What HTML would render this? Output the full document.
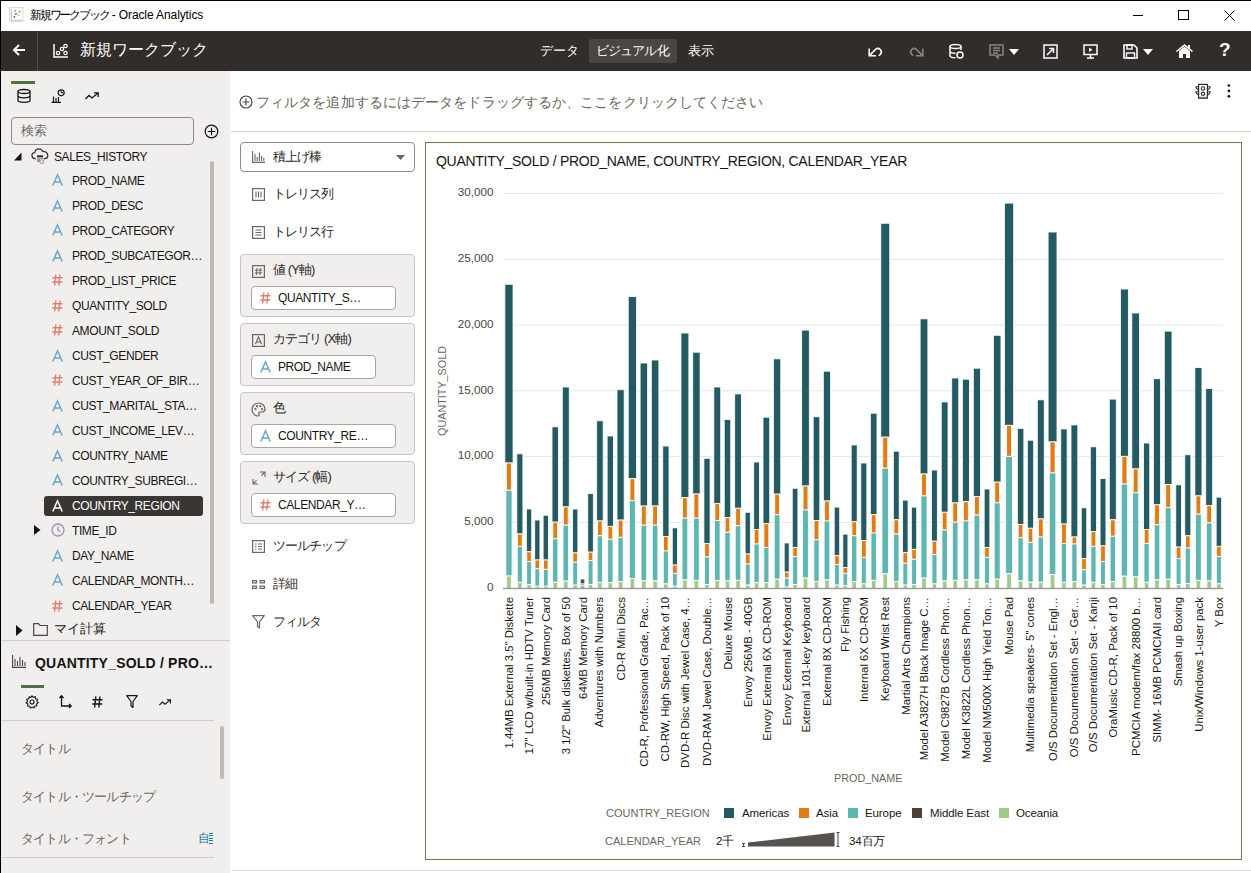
<!DOCTYPE html>
<html><head><meta charset="utf-8">
<style>
*{box-sizing:border-box;margin:0;padding:0}
html,body{width:1251px;height:873px;overflow:hidden;background:#fff;font-family:"Liberation Sans",sans-serif;color:#161513}
.a{position:absolute;white-space:nowrap}
svg{position:absolute;overflow:visible}
.t12{font-size:12px;letter-spacing:-0.4px;line-height:14px}
.ico{position:absolute}
</style></head><body>
<!-- window border -->
<div class="a" style="left:0;top:0;width:1251px;height:1px;background:#000"></div>
<div class="a" style="left:0;top:0;width:1px;height:873px;background:#000"></div>
<!-- title bar -->
<svg style="left:9px;top:7px" width="15" height="16" viewBox="0 0 15 16"><rect x="0.5" y="0.5" width="13.5" height="14" fill="#fbfbfb" stroke="#dcdcdc"/><path d="M2.3 2.2V13.2H13.5" stroke="#c4c4c4" stroke-width="1.1" fill="none"/><circle cx="6" cy="3.8" r="1.1" fill="#f0a040"/><circle cx="10.6" cy="4.8" r="1.1" fill="#f0a040"/><circle cx="6.9" cy="6.8" r="1.1" fill="#4a90d8"/><circle cx="9.5" cy="8" r="1.1" fill="#f0c840"/><circle cx="5.3" cy="9.8" r="1.1" fill="#4a90d8"/></svg>
<div class="a" style="left:30px;top:8px;font-size:12px;line-height:15px;color:#000"><span style="letter-spacing:-2.2px">新規ワークブック</span><span style="letter-spacing:-0.1px"> - Oracle Analytics</span></div>
<div class="a" style="left:1133px;top:15px;width:10px;height:1px;background:#000"></div>
<div class="a" style="left:1178px;top:10px;width:11px;height:10px;border:1px solid #000"></div>
<svg style="left:1224px;top:10px" width="11" height="11" viewBox="0 0 11 11"><path d="M0.5 0.5L10.5 10.5M10.5 0.5L0.5 10.5" stroke="#000" stroke-width="1"/></svg>
<!-- header -->
<div class="a" style="left:1px;top:31px;width:1250px;height:40px;background:#312d2a"></div>
<div class="a" style="left:37px;top:31px;width:1px;height:40px;background:#55504c"></div>
<svg style="left:11px;top:43px" width="16" height="14" viewBox="0 0 16 14"><path d="M14 7H3M8 2L3 7L8 12" stroke="#fff" stroke-width="2" fill="none"/></svg>
<svg style="left:53px;top:44px" width="16" height="14" viewBox="0 0 16 14">
<path d="M1 0V13H15" stroke="#fff" stroke-width="1.5" fill="none"/>
<circle cx="5" cy="9" r="1.7" stroke="#fff" stroke-width="1.2" fill="none"/><circle cx="9" cy="5" r="1.7" stroke="#fff" stroke-width="1.2" fill="none"/><circle cx="12.5" cy="2" r="1.7" stroke="#fff" stroke-width="1.2" fill="none"/><circle cx="12.5" cy="9" r="1.7" stroke="#fff" stroke-width="1.2" fill="none"/>
</svg>
<div class="a" style="left:80px;top:41px;font-size:16px;line-height:18px;color:#fff">新規ワークブック</div>
<div class="a" style="left:589px;top:39px;width:88px;height:24px;background:#4a4643;border-radius:3px"></div>
<div class="a" style="left:540px;top:44px;font-size:13px;line-height:14px;color:#fff">データ</div>
<div class="a" style="left:596px;top:44px;font-size:13px;line-height:14px;color:#fff;letter-spacing:-0.9px">ビジュアル化</div>
<div class="a" style="left:688px;top:44px;font-size:13px;line-height:14px;color:#fff">表示</div>
<!-- header right icons -->
<svg style="left:868px;top:45.5px" width="15" height="11" viewBox="0 0 15 11"><path d="M1.2 2.5V9.8H8M1.6 9.4L7.6 3.4A3.4 3.4 0 0 1 12.4 8.2L10.8 9.8" stroke="#fff" stroke-width="1.6" fill="none"/></svg>
<svg style="left:909px;top:45.5px" width="15" height="11" viewBox="0 0 15 11"><path d="M13.8 2.5V9.8H7M13.4 9.4L7.4 3.4A3.4 3.4 0 0 0 2.6 8.2L4.2 9.8" stroke="#8a8480" stroke-width="1.6" fill="none"/></svg>
<svg style="left:949px;top:44px" width="15" height="15" viewBox="0 0 15 15"><ellipse cx="6.5" cy="2.5" rx="5.5" ry="2" stroke="#fff" stroke-width="1.5" fill="none"/><path d="M1 2.5V11.5C1 13 4 13.8 6.5 13.8M12 2.5V6M1 7C1 8.5 4 9.3 6.5 9.3" stroke="#fff" stroke-width="1.5" fill="none"/><circle cx="11" cy="11" r="3" stroke="#fff" stroke-width="1.5" fill="none"/></svg>
<svg style="left:989px;top:44px" width="15" height="15" viewBox="0 0 15 15"><path d="M1 1H14V11H9V14L6 11H1Z" stroke="#8a8480" stroke-width="1.5" fill="none"/><path d="M4 4H11M4 6.5H11M4 9H9" stroke="#8a8480" stroke-width="1.3"/></svg>
<svg style="left:1009px;top:49px" width="11" height="7" viewBox="0 0 11 7"><path d="M0 0H10L5 6Z" fill="#fff"/></svg>
<svg style="left:1043px;top:44px" width="15" height="15" viewBox="0 0 15 15"><rect x="1" y="1" width="13" height="13" stroke="#fff" stroke-width="1.5" fill="none"/><path d="M4 11L10.5 4.5M6 4.5H10.5V9" stroke="#fff" stroke-width="1.5" fill="none"/></svg>
<svg style="left:1083px;top:44px" width="15" height="15" viewBox="0 0 15 15"><rect x="1" y="1" width="13" height="9.5" stroke="#fff" stroke-width="1.5" fill="none"/><path d="M6 3.5V8L9.5 5.75Z" fill="#fff"/><path d="M7.5 11V13.5M4 14H11" stroke="#fff" stroke-width="1.5"/></svg>
<svg style="left:1123px;top:44px" width="15" height="15" viewBox="0 0 15 15"><path d="M1 1H11L14 4V14H1Z" stroke="#fff" stroke-width="1.6" fill="none"/><rect x="4" y="1" width="5" height="4" stroke="#fff" stroke-width="1.4" fill="none"/><rect x="3.5" y="9" width="8" height="5" stroke="#fff" stroke-width="1.4" fill="none"/></svg>
<svg style="left:1143px;top:49px" width="11" height="7" viewBox="0 0 11 7"><path d="M0 0H10L5 6Z" fill="#fff"/></svg>
<svg style="left:1176px;top:44px" width="17" height="15" viewBox="0 0 17 15"><path d="M0.5 7.5L8.5 1L16.5 7.5" stroke="#fff" stroke-width="1.6" fill="none"/><path d="M3 7V14H7V10H10V14H14V7L8.5 2.5Z" fill="#fff"/><rect x="12" y="1" width="2" height="4" fill="#fff"/></svg>
<div class="a" style="left:1219px;top:40px;font-size:19px;line-height:20px;color:#fff;font-weight:bold">?</div>
<div class="a" style="left:1px;top:71px;width:229px;height:802px;background:#f1efed"></div>
<div class="a" style="left:11px;top:81px;width:24px;height:3px;background:#4e7341"></div>
<svg style="left:17px;top:89px" width="14" height="14" viewBox="0 0 14 14"><ellipse cx="7" cy="2.5" rx="6" ry="2" stroke="#161513" stroke-width="1.3" fill="none"/><path d="M1 2.5V11.2C1 12.5 4 13.3 7 13.3S13 12.5 13 11.2V2.5M1 6.8C1 8 4 8.8 7 8.8S13 8 13 6.8" stroke="#161513" stroke-width="1.3" fill="none"/></svg>
<svg style="left:51px;top:89px" width="14" height="14" viewBox="0 0 14 14"><path d="M0.5 13.3H10M2.5 13V7.5M5 13V9M7.5 13V8" stroke="#161513" stroke-width="1.2" fill="none"/><circle cx="10.2" cy="3.8" r="3" stroke="#161513" stroke-width="1.2" fill="none"/><path d="M10.2 1.5V3.8H12.4" stroke="#161513" stroke-width="1" fill="none"/></svg>
<svg style="left:85px;top:92px" width="14" height="8" viewBox="0 0 14 8"><path d="M0.5 7L4 3.5L7 6L13 1M9 0.8H13.2V5" stroke="#161513" stroke-width="1.3" fill="none"/></svg>
<div class="a" style="left:11px;top:117px;width:183px;height:28px;border:1px solid #8f8a85;border-radius:4px;background:#f1efed"></div>
<div class="a" style="left:21px;top:124px;font-size:13px;line-height:14px;color:#6f6a66">検索</div>
<svg style="left:204px;top:124px" width="15" height="15" viewBox="0 0 15 15"><circle cx="7.5" cy="7.5" r="6.3" stroke="#161513" stroke-width="1.2" fill="none"/><path d="M7.5 3.8V11.2M3.8 7.5H11.2" stroke="#161513" stroke-width="1.2"/></svg>
<div class="a" style="left:210px;top:161px;width:4px;height:443px;background:#bdb9b4;border-radius:2px"></div>
<svg style="left:14px;top:152px" width="8" height="9" viewBox="0 0 8 9"><path d="M7.5 0.5V8.5H0Z" fill="#161513"/></svg>
<svg style="left:31px;top:148px" width="18" height="17" viewBox="0 0 18 17"><path d="M4.8 10.6H4C2.2 10.6 0.9 9.3 0.9 7.6C0.9 5.9 2.2 4.6 3.8 4.6C4.2 2.4 5.8 0.8 7.8 0.8C9.6 0.8 11 1.9 11.6 3.4C14.6 3.2 16.8 5.2 16.8 7.6C16.8 9.3 15.6 10.6 13.8 10.6H12.6" stroke="#312d2a" stroke-width="1.2" fill="none"/><rect x="6" y="7.3" width="6" height="1.8" fill="#312d2a"/><rect x="6" y="9.4" width="6" height="1.3" fill="#8a8682"/><rect x="6" y="11" width="3" height="3" fill="#9a9692"/><circle cx="10.8" cy="13.6" r="1.9" stroke="#8a8682" stroke-width="0.9" fill="none"/></svg>
<div class="a t12" style="left:54px;top:150px">SALES_HISTORY</div>
<svg style="left:52px;top:174px" width="11" height="12" viewBox="0 0 11 12"><path d="M0.8 11.5L5.5 0.8L10.2 11.5M2.3 8H8.7" stroke="#6aa6c4" stroke-width="1.5" fill="none"/></svg>
<div class="a t12" style="left:72px;top:174px;color:#161513">PROD_NAME</div>
<svg style="left:52px;top:200px" width="11" height="12" viewBox="0 0 11 12"><path d="M0.8 11.5L5.5 0.8L10.2 11.5M2.3 8H8.7" stroke="#6aa6c4" stroke-width="1.5" fill="none"/></svg>
<div class="a t12" style="left:72px;top:199px;color:#161513">PROD_DESC</div>
<svg style="left:52px;top:224px" width="11" height="12" viewBox="0 0 11 12"><path d="M0.8 11.5L5.5 0.8L10.2 11.5M2.3 8H8.7" stroke="#6aa6c4" stroke-width="1.5" fill="none"/></svg>
<div class="a t12" style="left:72px;top:224px;color:#161513">PROD_CATEGORY</div>
<svg style="left:52px;top:250px" width="11" height="12" viewBox="0 0 11 12"><path d="M0.8 11.5L5.5 0.8L10.2 11.5M2.3 8H8.7" stroke="#6aa6c4" stroke-width="1.5" fill="none"/></svg>
<div class="a t12" style="left:72px;top:249px;color:#161513">PROD_SUBCATEGOR…</div>
<svg style="left:52px;top:274px" width="11" height="12" viewBox="0 0 11 12"><path d="M3.8 0.5L2.6 11.5M8 0.5L6.8 11.5M0.5 3.8H10.5M0.3 8H10.3" stroke="#e07f6e" stroke-width="1.4" fill="none"/></svg>
<div class="a t12" style="left:72px;top:274px;color:#161513">PROD_LIST_PRICE</div>
<svg style="left:52px;top:300px" width="11" height="12" viewBox="0 0 11 12"><path d="M3.8 0.5L2.6 11.5M8 0.5L6.8 11.5M0.5 3.8H10.5M0.3 8H10.3" stroke="#e07f6e" stroke-width="1.4" fill="none"/></svg>
<div class="a t12" style="left:72px;top:299px;color:#161513">QUANTITY_SOLD</div>
<svg style="left:52px;top:324px" width="11" height="12" viewBox="0 0 11 12"><path d="M3.8 0.5L2.6 11.5M8 0.5L6.8 11.5M0.5 3.8H10.5M0.3 8H10.3" stroke="#e07f6e" stroke-width="1.4" fill="none"/></svg>
<div class="a t12" style="left:72px;top:324px;color:#161513">AMOUNT_SOLD</div>
<svg style="left:52px;top:350px" width="11" height="12" viewBox="0 0 11 12"><path d="M0.8 11.5L5.5 0.8L10.2 11.5M2.3 8H8.7" stroke="#6aa6c4" stroke-width="1.5" fill="none"/></svg>
<div class="a t12" style="left:72px;top:349px;color:#161513">CUST_GENDER</div>
<svg style="left:52px;top:374px" width="11" height="12" viewBox="0 0 11 12"><path d="M3.8 0.5L2.6 11.5M8 0.5L6.8 11.5M0.5 3.8H10.5M0.3 8H10.3" stroke="#e07f6e" stroke-width="1.4" fill="none"/></svg>
<div class="a t12" style="left:72px;top:374px;color:#161513">CUST_YEAR_OF_BIR…</div>
<svg style="left:52px;top:400px" width="11" height="12" viewBox="0 0 11 12"><path d="M0.8 11.5L5.5 0.8L10.2 11.5M2.3 8H8.7" stroke="#6aa6c4" stroke-width="1.5" fill="none"/></svg>
<div class="a t12" style="left:72px;top:399px;color:#161513">CUST_MARITAL_STA…</div>
<svg style="left:52px;top:424px" width="11" height="12" viewBox="0 0 11 12"><path d="M0.8 11.5L5.5 0.8L10.2 11.5M2.3 8H8.7" stroke="#6aa6c4" stroke-width="1.5" fill="none"/></svg>
<div class="a t12" style="left:72px;top:424px;color:#161513">CUST_INCOME_LEV…</div>
<svg style="left:52px;top:450px" width="11" height="12" viewBox="0 0 11 12"><path d="M0.8 11.5L5.5 0.8L10.2 11.5M2.3 8H8.7" stroke="#6aa6c4" stroke-width="1.5" fill="none"/></svg>
<div class="a t12" style="left:72px;top:449px;color:#161513">COUNTRY_NAME</div>
<svg style="left:52px;top:474px" width="11" height="12" viewBox="0 0 11 12"><path d="M0.8 11.5L5.5 0.8L10.2 11.5M2.3 8H8.7" stroke="#6aa6c4" stroke-width="1.5" fill="none"/></svg>
<div class="a t12" style="left:72px;top:474px;color:#161513">COUNTRY_SUBREGI…</div>
<div class="a" style="left:44px;top:496px;width:159px;height:20px;background:#3a3633;border-radius:3px"></div>
<svg style="left:52px;top:500px" width="11" height="12" viewBox="0 0 11 12"><path d="M0.8 11.5L5.5 0.8L10.2 11.5M2.3 8H8.7" stroke="#fff" stroke-width="1.5" fill="none"/></svg>
<div class="a t12" style="left:72px;top:499px;color:#fff">COUNTRY_REGION</div>
<svg style="left:34px;top:525px" width="7" height="10" viewBox="0 0 7 10"><path d="M0 0L6.5 5L0 10Z" fill="#161513"/></svg>
<svg style="left:51px;top:523px" width="14" height="14" viewBox="0 0 14 14"><circle cx="7" cy="7" r="6" stroke="#9c8fba" stroke-width="1.3" fill="none"/><path d="M7 3.5V7.3L9.5 8.8" stroke="#9c8fba" stroke-width="1.3" fill="none"/></svg>
<div class="a t12" style="left:72px;top:524px;color:#161513">TIME_ID</div>
<svg style="left:52px;top:550px" width="11" height="12" viewBox="0 0 11 12"><path d="M0.8 11.5L5.5 0.8L10.2 11.5M2.3 8H8.7" stroke="#6aa6c4" stroke-width="1.5" fill="none"/></svg>
<div class="a t12" style="left:72px;top:549px;color:#161513">DAY_NAME</div>
<svg style="left:52px;top:574px" width="11" height="12" viewBox="0 0 11 12"><path d="M0.8 11.5L5.5 0.8L10.2 11.5M2.3 8H8.7" stroke="#6aa6c4" stroke-width="1.5" fill="none"/></svg>
<div class="a t12" style="left:72px;top:574px;color:#161513">CALENDAR_MONTH…</div>
<svg style="left:52px;top:600px" width="11" height="12" viewBox="0 0 11 12"><path d="M3.8 0.5L2.6 11.5M8 0.5L6.8 11.5M0.5 3.8H10.5M0.3 8H10.3" stroke="#e07f6e" stroke-width="1.4" fill="none"/></svg>
<div class="a t12" style="left:72px;top:599px;color:#161513">CALENDAR_YEAR</div>
<svg style="left:16px;top:625px" width="7" height="11" viewBox="0 0 7 11"><path d="M0 0L6.5 5.5L0 11Z" fill="#161513"/></svg>
<svg style="left:33px;top:623px" width="15" height="13" viewBox="0 0 15 13"><path d="M0.7 0.7H5.5L7 2.5H14.3V12.3H0.7Z" stroke="#4a4643" stroke-width="1.2" fill="none"/></svg>
<div class="a" style="left:54px;top:622px;font-size:13px;line-height:14px">マイ計算</div>
<div class="a" style="left:1px;top:640px;width:229px;height:1px;background:#cfcbc6"></div>
<svg style="left:12px;top:655px" width="14" height="13" viewBox="0 0 14 13"><path d="M0.6 0V12.4H14M3 11V4M5.5 11V6M8 11V2M10.5 11V5M13 11V7" stroke="#4a4643" stroke-width="1.1" fill="none"/></svg>
<div class="a" style="left:35px;top:655px;font-size:14px;line-height:16px;font-weight:bold;letter-spacing:0.2px">QUANTITY_SOLD / PRO…</div>
<div class="a" style="left:21px;top:685px;width:23px;height:3px;background:#4e7341"></div>
<svg style="left:25px;top:695px" width="14" height="14" viewBox="0 0 14 14"><path d="M7 0.8L8.3 2.3L10.2 1.8L10.6 3.7L12.4 4.4L11.8 6.3L13.2 7.7L11.6 8.9L11.8 10.8L9.9 11L9 12.8L7.2 12L5.4 13L4.6 11.2L2.6 11L2.9 9L1.2 7.8L2.5 6.3L1.8 4.4L3.7 3.8L4.1 1.9L6 2.4Z" stroke="#161513" stroke-width="1.1" fill="none"/><circle cx="7" cy="7" r="2" stroke="#161513" stroke-width="1.1" fill="none"/></svg>
<svg style="left:59px;top:695px" width="13" height="14" viewBox="0 0 13 14"><path d="M2.5 1V11H12M0.5 3L2.5 0.8L4.5 3M10 9L12.2 11L10 13" stroke="#161513" stroke-width="1.3" fill="none"/></svg>
<svg style="left:92px;top:696px" width="11" height="12" viewBox="0 0 11 12"><path d="M3.8 0.5L2.6 11.5M8 0.5L6.8 11.5M0.5 3.8H10.5M0.3 8H10.3" stroke="#161513" stroke-width="1.4" fill="none"/></svg>
<svg style="left:126px;top:695px" width="12" height="13" viewBox="0 0 12 13"><path d="M0.7 0.7H11.3L7 6.5V12.5L5 11V6.5Z" stroke="#161513" stroke-width="1.2" fill="none" stroke-linejoin="round"/></svg>
<svg style="left:158px;top:699px" width="14" height="7" viewBox="0 0 14 8"><path d="M0.5 7L4 3.5L7 6L13 1M9 0.8H13.2V5" stroke="#161513" stroke-width="1.3" fill="none"/></svg>
<div class="a" style="left:1px;top:720px;width:213px;height:1px;background:#cfcbc6"></div>
<div class="a" style="left:220px;top:726px;width:4px;height:53px;background:#bdb9b4;border-radius:2px"></div>
<div class="a" style="left:21px;top:742px;font-size:13px;line-height:14px;color:#6b6560;letter-spacing:-0.8px">タイトル</div>
<div class="a" style="left:21px;top:790px;font-size:13px;line-height:14px;color:#6b6560;letter-spacing:-0.8px">タイトル・ツールチップ</div>
<div class="a" style="left:21px;top:832px;font-size:13px;line-height:14px;color:#6b6560;letter-spacing:-0.8px">タイトル・フォント</div>
<div class="a" style="left:198px;top:832px;font-size:12px;line-height:13px;color:#1f7a9a">自</div>
<div class="a" style="left:209px;top:833px;width:4px;height:11px;background:repeating-linear-gradient(#1f7a9a 0 1px,transparent 1px 2.5px)"></div>
<div class="a" style="left:1px;top:857px;width:213px;height:1px;background:#cfcbc6"></div><svg style="left:239px;top:95px" width="14" height="14" viewBox="0 0 14 14"><circle cx="7" cy="7" r="6" stroke="#4a4643" stroke-width="1.2" fill="none"/><path d="M7 3.5V10.5M3.5 7H10.5" stroke="#4a4643" stroke-width="1.2"/></svg>
<div class="a" style="left:256px;top:94px;font-size:14px;line-height:16px;color:#6b6560;letter-spacing:0.1px">フィルタを追加するにはデータをドラッグするか、ここをクリックしてください</div>
<svg style="left:1195px;top:83px" width="16" height="17" viewBox="0 0 16 17"><rect x="3.6" y="1.4" width="8.8" height="14" stroke="#312d2a" stroke-width="1.2" fill="none"/><rect x="3.6" y="13.8" width="8.8" height="1.8" fill="#7a7672"/><path d="M3.4 3.8H1V4.8L3.4 7M3.4 8.8H1V9.8L3.4 12M12.6 3.8H15V4.8L12.6 7M12.6 8.8H15V9.8L12.6 12" stroke="#312d2a" stroke-width="1.1" fill="none"/><circle cx="8" cy="5.5" r="1.7" stroke="#312d2a" stroke-width="1.1" fill="none"/><circle cx="8" cy="10.8" r="1.7" stroke="#312d2a" stroke-width="1.1" fill="none"/></svg>
<svg style="left:1226px;top:83px" width="6" height="16" viewBox="0 0 6 16"><circle cx="2.9" cy="2.5" r="1.35" fill="#161513"/><circle cx="2.9" cy="7.9" r="1.35" fill="#161513"/><circle cx="2.9" cy="13.3" r="1.35" fill="#161513"/></svg>
<div class="a" style="left:231px;top:131px;width:1020px;height:1px;background:#d6d2ce"></div>
<div class="a" style="left:231px;top:870px;width:1020px;height:1px;background:#e0ddd9"></div>
<div class="a" style="left:240px;top:142px;width:175px;height:30px;border:1px solid #8f8a85;border-radius:4px"></div>
<svg style="left:252px;top:151px" width="13" height="12" viewBox="0 0 13 12"><path d="M0.6 0V11.4H13M3 10V3M5.2 10V6M7.4 10V1.5M9.6 10V5M11.8 10V7" stroke="#6b6560" stroke-width="1.1" fill="none"/></svg>
<div class="a" style="left:273px;top:150px;font-size:13px;line-height:14px;color:#2b2825;letter-spacing:-0.9px">積上げ棒</div>
<svg style="left:396px;top:155px" width="9" height="5" viewBox="0 0 9 5"><path d="M0 0H9L4.5 5Z" fill="#6b6560"/></svg>
<svg style="left:252px;top:188px" width="13" height="13" viewBox="0 0 13 13"><rect x="0.6" y="0.6" width="11.8" height="11.8" stroke="#6b6560" stroke-width="1.2" fill="none"/><path d="M4 3.5V9.5M6.5 3.5V9.5M9 3.5V9.5" stroke="#6b6560" stroke-width="1.1"/></svg>
<div class="a" style="left:273px;top:187px;font-size:13px;line-height:14px;color:#2b2825;letter-spacing:-0.9px">トレリス列</div>
<svg style="left:252px;top:226px" width="13" height="13" viewBox="0 0 13 13"><rect x="0.6" y="0.6" width="11.8" height="11.8" stroke="#6b6560" stroke-width="1.2" fill="none"/><path d="M3.5 4H9.5M3.5 6.5H9.5M3.5 9H9.5" stroke="#6b6560" stroke-width="1.1"/></svg>
<div class="a" style="left:273px;top:225px;font-size:13px;line-height:14px;color:#2b2825;letter-spacing:-0.9px">トレリス行</div>
<div class="a" style="left:240px;top:254px;width:175px;height:63px;border:1px solid #c9c5c0;border-radius:4px;background:#f1efed"></div>
<svg style="left:252px;top:265px" width="13" height="13" viewBox="0 0 13 13"><rect x="0.6" y="0.6" width="11.8" height="11.8" stroke="#6b6560" stroke-width="1.2" fill="none"/><path d="M5 3L4.3 10M8.5 3L7.8 10M3 5.2H10M3 7.9H10" stroke="#6b6560" stroke-width="1"/></svg>
<div class="a" style="left:273px;top:263px;font-size:13px;line-height:14px;color:#2b2825;letter-spacing:-0.9px">値 (Y軸)</div>
<div class="a" style="left:251px;top:286px;width:145px;height:24px;border:1px solid #aaa5a0;border-radius:4px;background:#fff"></div>
<svg style="left:260px;top:292px" width="11" height="12" viewBox="0 0 11 12"><path d="M3.8 0.5L2.6 11.5M8 0.5L6.8 11.5M0.5 3.8H10.5M0.3 8H10.3" stroke="#e07f6e" stroke-width="1.4" fill="none"/></svg>
<div class="a t12" style="left:278px;top:291px">QUANTITY_S…</div>
<div class="a" style="left:240px;top:323px;width:175px;height:63px;border:1px solid #c9c5c0;border-radius:4px;background:#f1efed"></div>
<svg style="left:252px;top:334px" width="13" height="13" viewBox="0 0 13 13"><rect x="0.6" y="0.6" width="11.8" height="11.8" stroke="#6b6560" stroke-width="1.2" fill="none"/><path d="M3.5 10L6.5 3L9.5 10M4.5 8H8.5" stroke="#6b6560" stroke-width="1.1" fill="none"/></svg>
<div class="a" style="left:273px;top:332px;font-size:13px;line-height:14px;color:#2b2825;letter-spacing:-0.9px">カテゴリ (X軸)</div>
<div class="a" style="left:251px;top:355px;width:125px;height:24px;border:1px solid #aaa5a0;border-radius:4px;background:#fff"></div>
<svg style="left:260px;top:361px" width="11" height="12" viewBox="0 0 11 12"><path d="M0.8 11.5L5.5 0.8L10.2 11.5M2.3 8H8.7" stroke="#6aa6c4" stroke-width="1.5" fill="none"/></svg>
<div class="a t12" style="left:278px;top:360px">PROD_NAME</div>
<div class="a" style="left:240px;top:392px;width:175px;height:63px;border:1px solid #c9c5c0;border-radius:4px;background:#f1efed"></div>
<svg style="left:251px;top:402px" width="15" height="15" viewBox="0 0 15 15"><path d="M7.5 1C3.8 1 1 3.8 1 7.5S3.8 14 7 14C8.3 14 8.5 13 8 12C7.5 11 8 10 9.2 10H11C12.8 10 14 8.8 14 7C14 3.7 11 1 7.5 1Z" stroke="#6b6560" stroke-width="1.2" fill="none"/><circle cx="4.5" cy="7" r="1.1" fill="#6b6560"/><circle cx="6" cy="4.2" r="1.1" fill="#6b6560"/><circle cx="9.3" cy="4.2" r="1.1" fill="#6b6560"/><circle cx="11" cy="7" r="1.1" fill="#6b6560"/></svg>
<div class="a" style="left:273px;top:401px;font-size:13px;line-height:14px;color:#2b2825;letter-spacing:-0.9px">色</div>
<div class="a" style="left:251px;top:424px;width:145px;height:24px;border:1px solid #aaa5a0;border-radius:4px;background:#fff"></div>
<svg style="left:260px;top:430px" width="11" height="12" viewBox="0 0 11 12"><path d="M0.8 11.5L5.5 0.8L10.2 11.5M2.3 8H8.7" stroke="#6aa6c4" stroke-width="1.5" fill="none"/></svg>
<div class="a t12" style="left:278px;top:429px">COUNTRY_RE…</div>
<div class="a" style="left:240px;top:461px;width:175px;height:63px;border:1px solid #c9c5c0;border-radius:4px;background:#f1efed"></div>
<svg style="left:252px;top:471px" width="14" height="14" viewBox="0 0 14 14"><path d="M1 8V13H6M8 1H13V6M1 13L4.5 9.5M13 1L9.5 4.5" stroke="#6b6560" stroke-width="1.1" fill="none"/></svg>
<div class="a" style="left:273px;top:470px;font-size:13px;line-height:14px;color:#2b2825;letter-spacing:-0.9px">サイズ (幅)</div>
<div class="a" style="left:251px;top:493px;width:145px;height:24px;border:1px solid #aaa5a0;border-radius:4px;background:#fff"></div>
<svg style="left:260px;top:499px" width="11" height="12" viewBox="0 0 11 12"><path d="M3.8 0.5L2.6 11.5M8 0.5L6.8 11.5M0.5 3.8H10.5M0.3 8H10.3" stroke="#e07f6e" stroke-width="1.4" fill="none"/></svg>
<div class="a t12" style="left:278px;top:498px">CALENDAR_Y…</div>
<svg style="left:252px;top:540px" width="13" height="13" viewBox="0 0 13 13"><rect x="0.6" y="0.6" width="11.8" height="11.8" stroke="#6b6560" stroke-width="1.2" fill="none"/><path d="M3 4H4.5M6 4H10M3 6.5H4.5M6 6.5H10M3 9H4.5M6 9H10" stroke="#6b6560" stroke-width="1.1"/></svg>
<div class="a" style="left:273px;top:539px;font-size:13px;line-height:14px;color:#2b2825;letter-spacing:-0.9px">ツールチップ</div>
<svg style="left:252px;top:579px" width="13" height="11" viewBox="0 0 13 11"><path d="M0 1H5V4.5H0ZM7.5 1H13V4.5H7.5ZM0 6.5H5V10H0ZM7.5 6.5H13V10H7.5Z" fill="#6b6560"/><path d="M1.2 2.2H3.8V3.3H1.2ZM8.7 2.2H11.8V3.3H8.7ZM1.2 7.7H3.8V8.8H1.2ZM8.7 7.7H11.8V8.8H8.7Z" fill="#fff"/></svg>
<div class="a" style="left:273px;top:577px;font-size:13px;line-height:14px;color:#2b2825;letter-spacing:-0.9px">詳細</div>
<svg style="left:252px;top:615px" width="13" height="14" viewBox="0 0 13 14"><path d="M0.7 0.7H12.3L7.5 6.8V13L5.5 11.5V6.8Z" stroke="#6b6560" stroke-width="1.2" fill="none" stroke-linejoin="round"/></svg>
<div class="a" style="left:273px;top:615px;font-size:13px;line-height:14px;color:#2b2825;letter-spacing:-0.9px">フィルタ</div>
<div class="a" style="left:425px;top:142px;width:817px;height:718px;border:1.5px solid #5f7f52"></div><svg style="left:0;top:0" width="1251" height="873" viewBox="0 0 1251 873">
<rect x="503" y="192.9" width="720" height="1" fill="#e3e5ea"/>
<rect x="503" y="258.9" width="720" height="1" fill="#e3e5ea"/>
<rect x="503" y="324.7" width="720" height="1" fill="#e3e5ea"/>
<rect x="503" y="390.3" width="720" height="1" fill="#e3e5ea"/>
<rect x="503" y="456.1" width="720" height="1" fill="#e3e5ea"/>
<rect x="503" y="521.9" width="720" height="1" fill="#e3e5ea"/>
<rect x="504.83" y="284.30" width="8.24" height="178.70" fill="#245a61" stroke="#fff" stroke-opacity="0.85" stroke-width="1"/>
<rect x="506.46" y="463.00" width="4.99" height="27.30" fill="#e07c14" stroke="#fff" stroke-opacity="0.85" stroke-width="1"/>
<rect x="505.83" y="490.30" width="6.24" height="85.70" fill="#5fb6b0" stroke="#fff" stroke-opacity="0.85" stroke-width="1"/>
<rect x="506.62" y="576.00" width="4.67" height="12.50" fill="#a0c98a" stroke="#fff" stroke-opacity="0.85" stroke-width="1"/>
<rect x="516.79" y="453.80" width="6.12" height="80.10" fill="#245a61" stroke="#fff" stroke-opacity="0.85" stroke-width="1"/>
<rect x="517.52" y="533.90" width="4.67" height="12.50" fill="#e07c14" stroke="#fff" stroke-opacity="0.85" stroke-width="1"/>
<rect x="517.26" y="546.40" width="5.17" height="35.90" fill="#5fb6b0" stroke="#fff" stroke-opacity="0.85" stroke-width="1"/>
<rect x="517.58" y="582.30" width="4.53" height="6.20" fill="#a0c98a" stroke="#fff" stroke-opacity="0.85" stroke-width="1"/>
<rect x="526.39" y="509.00" width="5.32" height="42.80" fill="#245a61" stroke="#fff" stroke-opacity="0.85" stroke-width="1"/>
<rect x="526.74" y="551.80" width="4.61" height="9.80" fill="#e07c14" stroke="#fff" stroke-opacity="0.85" stroke-width="1"/>
<rect x="526.60" y="561.60" width="4.89" height="23.00" fill="#5fb6b0" stroke="#fff" stroke-opacity="0.85" stroke-width="1"/>
<rect x="526.81" y="584.60" width="4.48" height="3.90" fill="#a0c98a" stroke="#fff" stroke-opacity="0.85" stroke-width="1"/>
<rect x="534.67" y="520.00" width="5.26" height="40.00" fill="#245a61" stroke="#fff" stroke-opacity="0.85" stroke-width="1"/>
<rect x="535.01" y="560.00" width="4.59" height="8.70" fill="#e07c14" stroke="#fff" stroke-opacity="0.85" stroke-width="1"/>
<rect x="534.91" y="568.70" width="4.78" height="17.60" fill="#5fb6b0" stroke="#fff" stroke-opacity="0.85" stroke-width="1"/>
<rect x="535.08" y="586.30" width="4.45" height="2.20" fill="#a0c98a" stroke="#fff" stroke-opacity="0.85" stroke-width="1"/>
<rect x="543.12" y="515.30" width="5.36" height="44.70" fill="#245a61" stroke="#fff" stroke-opacity="0.85" stroke-width="1"/>
<rect x="543.50" y="560.00" width="4.60" height="9.40" fill="#e07c14" stroke="#fff" stroke-opacity="0.85" stroke-width="1"/>
<rect x="543.42" y="569.40" width="4.76" height="16.90" fill="#5fb6b0" stroke="#fff" stroke-opacity="0.85" stroke-width="1"/>
<rect x="543.58" y="586.30" width="4.45" height="2.20" fill="#a0c98a" stroke="#fff" stroke-opacity="0.85" stroke-width="1"/>
<rect x="552.02" y="426.80" width="6.45" height="95.40" fill="#245a61" stroke="#fff" stroke-opacity="0.85" stroke-width="1"/>
<rect x="552.87" y="522.20" width="4.76" height="16.60" fill="#e07c14" stroke="#fff" stroke-opacity="0.85" stroke-width="1"/>
<rect x="552.58" y="538.80" width="5.34" height="43.50" fill="#5fb6b0" stroke="#fff" stroke-opacity="0.85" stroke-width="1"/>
<rect x="552.98" y="582.30" width="4.53" height="6.20" fill="#a0c98a" stroke="#fff" stroke-opacity="0.85" stroke-width="1"/>
<rect x="562.31" y="387.00" width="6.98" height="119.90" fill="#245a61" stroke="#fff" stroke-opacity="0.85" stroke-width="1"/>
<rect x="563.40" y="506.90" width="4.79" height="18.30" fill="#e07c14" stroke="#fff" stroke-opacity="0.85" stroke-width="1"/>
<rect x="563.00" y="525.20" width="5.60" height="55.90" fill="#5fb6b0" stroke="#fff" stroke-opacity="0.85" stroke-width="1"/>
<rect x="563.52" y="581.10" width="4.56" height="7.40" fill="#a0c98a" stroke="#fff" stroke-opacity="0.85" stroke-width="1"/>
<rect x="572.53" y="509.00" width="5.34" height="43.90" fill="#245a61" stroke="#fff" stroke-opacity="0.85" stroke-width="1"/>
<rect x="572.90" y="552.90" width="4.60" height="9.40" fill="#e07c14" stroke="#fff" stroke-opacity="0.85" stroke-width="1"/>
<rect x="572.75" y="562.30" width="4.89" height="22.80" fill="#5fb6b0" stroke="#fff" stroke-opacity="0.85" stroke-width="1"/>
<rect x="572.96" y="585.10" width="4.47" height="3.40" fill="#a0c98a" stroke="#fff" stroke-opacity="0.85" stroke-width="1"/>
<rect x="580.30" y="579.00" width="4.51" height="5.00" fill="#245a61" stroke="#fff" stroke-opacity="0.85" stroke-width="1"/>
<rect x="580.33" y="584.00" width="4.44" height="1.90" fill="#e07c14" stroke="#fff" stroke-opacity="0.85" stroke-width="1"/>
<rect x="580.32" y="585.90" width="4.47" height="3.10" fill="#5fb6b0" stroke="#fff" stroke-opacity="0.85" stroke-width="1"/>
<rect x="587.72" y="493.50" width="5.66" height="58.70" fill="#245a61" stroke="#fff" stroke-opacity="0.85" stroke-width="1"/>
<rect x="588.26" y="552.20" width="4.58" height="8.30" fill="#e07c14" stroke="#fff" stroke-opacity="0.85" stroke-width="1"/>
<rect x="588.09" y="560.50" width="4.92" height="24.10" fill="#5fb6b0" stroke="#fff" stroke-opacity="0.85" stroke-width="1"/>
<rect x="588.31" y="584.60" width="4.48" height="3.90" fill="#a0c98a" stroke="#fff" stroke-opacity="0.85" stroke-width="1"/>
<rect x="596.62" y="420.70" width="6.56" height="100.30" fill="#245a61" stroke="#fff" stroke-opacity="0.85" stroke-width="1"/>
<rect x="597.54" y="521.00" width="4.72" height="14.80" fill="#e07c14" stroke="#fff" stroke-opacity="0.85" stroke-width="1"/>
<rect x="597.20" y="535.80" width="5.40" height="46.50" fill="#5fb6b0" stroke="#fff" stroke-opacity="0.85" stroke-width="1"/>
<rect x="597.63" y="582.30" width="4.53" height="6.20" fill="#a0c98a" stroke="#fff" stroke-opacity="0.85" stroke-width="1"/>
<rect x="607.13" y="436.00" width="6.34" height="90.40" fill="#245a61" stroke="#fff" stroke-opacity="0.85" stroke-width="1"/>
<rect x="607.96" y="526.40" width="4.68" height="12.90" fill="#e07c14" stroke="#fff" stroke-opacity="0.85" stroke-width="1"/>
<rect x="607.63" y="539.30" width="5.33" height="43.40" fill="#5fb6b0" stroke="#fff" stroke-opacity="0.85" stroke-width="1"/>
<rect x="608.04" y="582.70" width="4.52" height="5.80" fill="#a0c98a" stroke="#fff" stroke-opacity="0.85" stroke-width="1"/>
<rect x="617.00" y="389.70" width="7.20" height="130.40" fill="#245a61" stroke="#fff" stroke-opacity="0.85" stroke-width="1"/>
<rect x="618.21" y="520.10" width="4.77" height="17.30" fill="#e07c14" stroke="#fff" stroke-opacity="0.85" stroke-width="1"/>
<rect x="617.92" y="537.40" width="5.35" height="44.20" fill="#5fb6b0" stroke="#fff" stroke-opacity="0.85" stroke-width="1"/>
<rect x="618.33" y="581.60" width="4.55" height="6.90" fill="#a0c98a" stroke="#fff" stroke-opacity="0.85" stroke-width="1"/>
<rect x="628.24" y="296.50" width="8.32" height="182.20" fill="#245a61" stroke="#fff" stroke-opacity="0.85" stroke-width="1"/>
<rect x="629.96" y="478.70" width="4.87" height="21.90" fill="#e07c14" stroke="#fff" stroke-opacity="0.85" stroke-width="1"/>
<rect x="629.36" y="500.60" width="6.07" height="77.90" fill="#5fb6b0" stroke="#fff" stroke-opacity="0.85" stroke-width="1"/>
<rect x="630.09" y="578.50" width="4.62" height="10.00" fill="#a0c98a" stroke="#fff" stroke-opacity="0.85" stroke-width="1"/>
<rect x="640.11" y="363.00" width="7.47" height="143.00" fill="#245a61" stroke="#fff" stroke-opacity="0.85" stroke-width="1"/>
<rect x="641.44" y="506.00" width="4.81" height="19.20" fill="#e07c14" stroke="#fff" stroke-opacity="0.85" stroke-width="1"/>
<rect x="641.05" y="525.20" width="5.60" height="55.70" fill="#5fb6b0" stroke="#fff" stroke-opacity="0.85" stroke-width="1"/>
<rect x="641.57" y="580.90" width="4.56" height="7.60" fill="#a0c98a" stroke="#fff" stroke-opacity="0.85" stroke-width="1"/>
<rect x="651.33" y="360.00" width="7.54" height="146.00" fill="#245a61" stroke="#fff" stroke-opacity="0.85" stroke-width="1"/>
<rect x="652.69" y="506.00" width="4.81" height="19.20" fill="#e07c14" stroke="#fff" stroke-opacity="0.85" stroke-width="1"/>
<rect x="652.30" y="525.20" width="5.60" height="55.70" fill="#5fb6b0" stroke="#fff" stroke-opacity="0.85" stroke-width="1"/>
<rect x="652.82" y="580.90" width="4.56" height="7.60" fill="#a0c98a" stroke="#fff" stroke-opacity="0.85" stroke-width="1"/>
<rect x="662.68" y="446.00" width="6.35" height="90.50" fill="#245a61" stroke="#fff" stroke-opacity="0.85" stroke-width="1"/>
<rect x="663.49" y="536.50" width="4.71" height="14.50" fill="#e07c14" stroke="#fff" stroke-opacity="0.85" stroke-width="1"/>
<rect x="663.30" y="551.00" width="5.11" height="32.90" fill="#5fb6b0" stroke="#fff" stroke-opacity="0.85" stroke-width="1"/>
<rect x="663.60" y="583.90" width="4.50" height="4.60" fill="#a0c98a" stroke="#fff" stroke-opacity="0.85" stroke-width="1"/>
<rect x="672.30" y="527.80" width="5.20" height="37.30" fill="#245a61" stroke="#fff" stroke-opacity="0.85" stroke-width="1"/>
<rect x="672.61" y="565.10" width="4.58" height="8.30" fill="#e07c14" stroke="#fff" stroke-opacity="0.85" stroke-width="1"/>
<rect x="672.56" y="573.40" width="4.68" height="12.90" fill="#5fb6b0" stroke="#fff" stroke-opacity="0.85" stroke-width="1"/>
<rect x="672.68" y="586.30" width="4.45" height="2.20" fill="#a0c98a" stroke="#fff" stroke-opacity="0.85" stroke-width="1"/>
<rect x="680.93" y="333.00" width="7.94" height="164.70" fill="#245a61" stroke="#fff" stroke-opacity="0.85" stroke-width="1"/>
<rect x="682.48" y="497.70" width="4.84" height="20.50" fill="#e07c14" stroke="#fff" stroke-opacity="0.85" stroke-width="1"/>
<rect x="682.04" y="518.20" width="5.73" height="61.70" fill="#5fb6b0" stroke="#fff" stroke-opacity="0.85" stroke-width="1"/>
<rect x="682.61" y="579.90" width="4.58" height="8.60" fill="#a0c98a" stroke="#fff" stroke-opacity="0.85" stroke-width="1"/>
<rect x="692.68" y="352.20" width="7.45" height="141.80" fill="#245a61" stroke="#fff" stroke-opacity="0.85" stroke-width="1"/>
<rect x="693.94" y="494.00" width="4.92" height="24.20" fill="#e07c14" stroke="#fff" stroke-opacity="0.85" stroke-width="1"/>
<rect x="693.53" y="518.20" width="5.74" height="62.20" fill="#5fb6b0" stroke="#fff" stroke-opacity="0.85" stroke-width="1"/>
<rect x="694.11" y="580.40" width="4.57" height="8.10" fill="#a0c98a" stroke="#fff" stroke-opacity="0.85" stroke-width="1"/>
<rect x="703.88" y="458.30" width="6.23" height="85.20" fill="#245a61" stroke="#fff" stroke-opacity="0.85" stroke-width="1"/>
<rect x="704.66" y="543.50" width="4.69" height="13.40" fill="#e07c14" stroke="#fff" stroke-opacity="0.85" stroke-width="1"/>
<rect x="704.50" y="556.90" width="5.00" height="27.70" fill="#5fb6b0" stroke="#fff" stroke-opacity="0.85" stroke-width="1"/>
<rect x="704.76" y="584.60" width="4.48" height="3.90" fill="#a0c98a" stroke="#fff" stroke-opacity="0.85" stroke-width="1"/>
<rect x="713.80" y="387.00" width="6.91" height="116.60" fill="#245a61" stroke="#fff" stroke-opacity="0.85" stroke-width="1"/>
<rect x="714.87" y="503.60" width="4.76" height="16.90" fill="#e07c14" stroke="#fff" stroke-opacity="0.85" stroke-width="1"/>
<rect x="714.41" y="520.50" width="5.69" height="59.90" fill="#5fb6b0" stroke="#fff" stroke-opacity="0.85" stroke-width="1"/>
<rect x="714.96" y="580.40" width="4.57" height="8.10" fill="#a0c98a" stroke="#fff" stroke-opacity="0.85" stroke-width="1"/>
<rect x="724.24" y="419.50" width="6.51" height="98.20" fill="#245a61" stroke="#fff" stroke-opacity="0.85" stroke-width="1"/>
<rect x="725.14" y="517.70" width="4.71" height="14.60" fill="#e07c14" stroke="#fff" stroke-opacity="0.85" stroke-width="1"/>
<rect x="724.78" y="532.30" width="5.44" height="48.60" fill="#5fb6b0" stroke="#fff" stroke-opacity="0.85" stroke-width="1"/>
<rect x="725.22" y="580.90" width="4.56" height="7.60" fill="#a0c98a" stroke="#fff" stroke-opacity="0.85" stroke-width="1"/>
<rect x="734.62" y="393.90" width="6.86" height="114.40" fill="#245a61" stroke="#fff" stroke-opacity="0.85" stroke-width="1"/>
<rect x="735.66" y="508.30" width="4.77" height="17.40" fill="#e07c14" stroke="#fff" stroke-opacity="0.85" stroke-width="1"/>
<rect x="735.26" y="525.70" width="5.58" height="54.70" fill="#5fb6b0" stroke="#fff" stroke-opacity="0.85" stroke-width="1"/>
<rect x="735.76" y="580.40" width="4.57" height="8.10" fill="#a0c98a" stroke="#fff" stroke-opacity="0.85" stroke-width="1"/>
<rect x="745.10" y="512.30" width="5.30" height="41.80" fill="#245a61" stroke="#fff" stroke-opacity="0.85" stroke-width="1"/>
<rect x="745.44" y="554.10" width="4.61" height="9.90" fill="#e07c14" stroke="#fff" stroke-opacity="0.85" stroke-width="1"/>
<rect x="745.32" y="564.00" width="4.85" height="21.10" fill="#5fb6b0" stroke="#fff" stroke-opacity="0.85" stroke-width="1"/>
<rect x="745.51" y="585.10" width="4.47" height="3.40" fill="#a0c98a" stroke="#fff" stroke-opacity="0.85" stroke-width="1"/>
<rect x="753.67" y="462.00" width="5.85" height="67.50" fill="#245a61" stroke="#fff" stroke-opacity="0.85" stroke-width="1"/>
<rect x="754.24" y="529.50" width="4.71" height="14.50" fill="#e07c14" stroke="#fff" stroke-opacity="0.85" stroke-width="1"/>
<rect x="753.98" y="544.00" width="5.23" height="38.70" fill="#5fb6b0" stroke="#fff" stroke-opacity="0.85" stroke-width="1"/>
<rect x="754.34" y="582.70" width="4.52" height="5.80" fill="#a0c98a" stroke="#fff" stroke-opacity="0.85" stroke-width="1"/>
<rect x="763.01" y="417.20" width="6.69" height="106.40" fill="#245a61" stroke="#fff" stroke-opacity="0.85" stroke-width="1"/>
<rect x="763.89" y="523.60" width="4.91" height="23.90" fill="#e07c14" stroke="#fff" stroke-opacity="0.85" stroke-width="1"/>
<rect x="763.77" y="547.50" width="5.16" height="35.20" fill="#5fb6b0" stroke="#fff" stroke-opacity="0.85" stroke-width="1"/>
<rect x="764.09" y="582.70" width="4.52" height="5.80" fill="#a0c98a" stroke="#fff" stroke-opacity="0.85" stroke-width="1"/>
<rect x="773.44" y="358.80" width="7.31" height="135.40" fill="#245a61" stroke="#fff" stroke-opacity="0.85" stroke-width="1"/>
<rect x="774.68" y="494.20" width="4.84" height="20.50" fill="#e07c14" stroke="#fff" stroke-opacity="0.85" stroke-width="1"/>
<rect x="774.21" y="514.70" width="5.79" height="64.50" fill="#5fb6b0" stroke="#fff" stroke-opacity="0.85" stroke-width="1"/>
<rect x="774.80" y="579.20" width="4.60" height="9.30" fill="#a0c98a" stroke="#fff" stroke-opacity="0.85" stroke-width="1"/>
<rect x="784.19" y="543.00" width="5.03" height="29.20" fill="#245a61" stroke="#fff" stroke-opacity="0.85" stroke-width="1"/>
<rect x="784.44" y="572.20" width="4.53" height="5.90" fill="#e07c14" stroke="#fff" stroke-opacity="0.85" stroke-width="1"/>
<rect x="784.40" y="578.10" width="4.59" height="8.90" fill="#5fb6b0" stroke="#fff" stroke-opacity="0.85" stroke-width="1"/>
<rect x="784.48" y="587.00" width="4.43" height="1.50" fill="#a0c98a" stroke="#fff" stroke-opacity="0.85" stroke-width="1"/>
<rect x="792.26" y="488.30" width="5.67" height="59.20" fill="#245a61" stroke="#fff" stroke-opacity="0.85" stroke-width="1"/>
<rect x="792.80" y="547.50" width="4.59" height="9.00" fill="#e07c14" stroke="#fff" stroke-opacity="0.85" stroke-width="1"/>
<rect x="792.60" y="556.50" width="5.00" height="28.10" fill="#5fb6b0" stroke="#fff" stroke-opacity="0.85" stroke-width="1"/>
<rect x="792.86" y="584.60" width="4.48" height="3.90" fill="#a0c98a" stroke="#fff" stroke-opacity="0.85" stroke-width="1"/>
<rect x="801.62" y="330.10" width="7.75" height="155.90" fill="#245a61" stroke="#fff" stroke-opacity="0.85" stroke-width="1"/>
<rect x="803.04" y="486.00" width="4.92" height="24.00" fill="#e07c14" stroke="#fff" stroke-opacity="0.85" stroke-width="1"/>
<rect x="802.57" y="510.00" width="5.86" height="68.10" fill="#5fb6b0" stroke="#fff" stroke-opacity="0.85" stroke-width="1"/>
<rect x="803.19" y="578.10" width="4.62" height="10.40" fill="#a0c98a" stroke="#fff" stroke-opacity="0.85" stroke-width="1"/>
<rect x="813.18" y="416.70" width="6.63" height="103.80" fill="#245a61" stroke="#fff" stroke-opacity="0.85" stroke-width="1"/>
<rect x="814.09" y="520.50" width="4.81" height="19.30" fill="#e07c14" stroke="#fff" stroke-opacity="0.85" stroke-width="1"/>
<rect x="813.85" y="539.80" width="5.30" height="41.80" fill="#5fb6b0" stroke="#fff" stroke-opacity="0.85" stroke-width="1"/>
<rect x="814.23" y="581.60" width="4.55" height="6.90" fill="#a0c98a" stroke="#fff" stroke-opacity="0.85" stroke-width="1"/>
<rect x="823.35" y="371.20" width="7.19" height="129.80" fill="#245a61" stroke="#fff" stroke-opacity="0.85" stroke-width="1"/>
<rect x="824.54" y="501.00" width="4.83" height="20.00" fill="#e07c14" stroke="#fff" stroke-opacity="0.85" stroke-width="1"/>
<rect x="824.12" y="521.00" width="5.67" height="58.90" fill="#5fb6b0" stroke="#fff" stroke-opacity="0.85" stroke-width="1"/>
<rect x="824.66" y="579.90" width="4.58" height="8.60" fill="#a0c98a" stroke="#fff" stroke-opacity="0.85" stroke-width="1"/>
<rect x="834.23" y="507.10" width="5.44" height="48.60" fill="#245a61" stroke="#fff" stroke-opacity="0.85" stroke-width="1"/>
<rect x="834.66" y="555.70" width="4.59" height="8.80" fill="#e07c14" stroke="#fff" stroke-opacity="0.85" stroke-width="1"/>
<rect x="834.53" y="564.50" width="4.84" height="20.60" fill="#5fb6b0" stroke="#fff" stroke-opacity="0.85" stroke-width="1"/>
<rect x="834.71" y="585.10" width="4.47" height="3.40" fill="#a0c98a" stroke="#fff" stroke-opacity="0.85" stroke-width="1"/>
<rect x="842.79" y="534.10" width="5.12" height="33.40" fill="#245a61" stroke="#fff" stroke-opacity="0.85" stroke-width="1"/>
<rect x="843.09" y="567.50" width="4.53" height="5.90" fill="#e07c14" stroke="#fff" stroke-opacity="0.85" stroke-width="1"/>
<rect x="843.02" y="573.40" width="4.67" height="12.40" fill="#5fb6b0" stroke="#fff" stroke-opacity="0.85" stroke-width="1"/>
<rect x="843.12" y="585.80" width="4.46" height="2.70" fill="#a0c98a" stroke="#fff" stroke-opacity="0.85" stroke-width="1"/>
<rect x="851.17" y="444.90" width="6.05" height="76.80" fill="#245a61" stroke="#fff" stroke-opacity="0.85" stroke-width="1"/>
<rect x="851.85" y="521.70" width="4.70" height="14.10" fill="#e07c14" stroke="#fff" stroke-opacity="0.85" stroke-width="1"/>
<rect x="851.51" y="535.80" width="5.38" height="45.80" fill="#5fb6b0" stroke="#fff" stroke-opacity="0.85" stroke-width="1"/>
<rect x="851.93" y="581.60" width="4.55" height="6.90" fill="#a0c98a" stroke="#fff" stroke-opacity="0.85" stroke-width="1"/>
<rect x="860.77" y="463.00" width="6.07" height="77.50" fill="#245a61" stroke="#fff" stroke-opacity="0.85" stroke-width="1"/>
<rect x="861.42" y="540.50" width="4.76" height="16.90" fill="#e07c14" stroke="#fff" stroke-opacity="0.85" stroke-width="1"/>
<rect x="861.32" y="557.40" width="4.97" height="26.50" fill="#5fb6b0" stroke="#fff" stroke-opacity="0.85" stroke-width="1"/>
<rect x="861.55" y="583.90" width="4.50" height="4.60" fill="#a0c98a" stroke="#fff" stroke-opacity="0.85" stroke-width="1"/>
<rect x="870.41" y="413.20" width="6.58" height="101.50" fill="#245a61" stroke="#fff" stroke-opacity="0.85" stroke-width="1"/>
<rect x="871.30" y="514.70" width="4.79" height="18.30" fill="#e07c14" stroke="#fff" stroke-opacity="0.85" stroke-width="1"/>
<rect x="870.99" y="533.00" width="5.42" height="47.40" fill="#5fb6b0" stroke="#fff" stroke-opacity="0.85" stroke-width="1"/>
<rect x="871.41" y="580.40" width="4.57" height="8.10" fill="#a0c98a" stroke="#fff" stroke-opacity="0.85" stroke-width="1"/>
<rect x="880.75" y="223.30" width="9.00" height="213.90" fill="#245a61" stroke="#fff" stroke-opacity="0.85" stroke-width="1"/>
<rect x="882.72" y="437.20" width="5.07" height="31.00" fill="#e07c14" stroke="#fff" stroke-opacity="0.85" stroke-width="1"/>
<rect x="881.91" y="468.20" width="6.67" height="105.60" fill="#5fb6b0" stroke="#fff" stroke-opacity="0.85" stroke-width="1"/>
<rect x="882.89" y="573.80" width="4.72" height="14.70" fill="#a0c98a" stroke="#fff" stroke-opacity="0.85" stroke-width="1"/>
<rect x="893.36" y="451.20" width="5.87" height="68.60" fill="#245a61" stroke="#fff" stroke-opacity="0.85" stroke-width="1"/>
<rect x="893.95" y="519.80" width="4.71" height="14.30" fill="#e07c14" stroke="#fff" stroke-opacity="0.85" stroke-width="1"/>
<rect x="893.59" y="534.10" width="5.42" height="47.50" fill="#5fb6b0" stroke="#fff" stroke-opacity="0.85" stroke-width="1"/>
<rect x="894.03" y="581.60" width="4.55" height="6.90" fill="#a0c98a" stroke="#fff" stroke-opacity="0.85" stroke-width="1"/>
<rect x="902.53" y="500.10" width="5.53" height="52.60" fill="#245a61" stroke="#fff" stroke-opacity="0.85" stroke-width="1"/>
<rect x="902.99" y="552.70" width="4.63" height="10.60" fill="#e07c14" stroke="#fff" stroke-opacity="0.85" stroke-width="1"/>
<rect x="902.87" y="563.30" width="4.87" height="21.80" fill="#5fb6b0" stroke="#fff" stroke-opacity="0.85" stroke-width="1"/>
<rect x="903.06" y="585.10" width="4.47" height="3.40" fill="#a0c98a" stroke="#fff" stroke-opacity="0.85" stroke-width="1"/>
<rect x="911.40" y="507.10" width="5.31" height="42.30" fill="#245a61" stroke="#fff" stroke-opacity="0.85" stroke-width="1"/>
<rect x="911.74" y="549.40" width="4.61" height="9.90" fill="#e07c14" stroke="#fff" stroke-opacity="0.85" stroke-width="1"/>
<rect x="911.58" y="559.30" width="4.94" height="25.30" fill="#5fb6b0" stroke="#fff" stroke-opacity="0.85" stroke-width="1"/>
<rect x="911.81" y="584.60" width="4.48" height="3.90" fill="#a0c98a" stroke="#fff" stroke-opacity="0.85" stroke-width="1"/>
<rect x="920.13" y="318.80" width="7.74" height="155.20" fill="#245a61" stroke="#fff" stroke-opacity="0.85" stroke-width="1"/>
<rect x="921.56" y="474.00" width="4.87" height="21.90" fill="#e07c14" stroke="#fff" stroke-opacity="0.85" stroke-width="1"/>
<rect x="920.92" y="495.90" width="6.17" height="82.20" fill="#5fb6b0" stroke="#fff" stroke-opacity="0.85" stroke-width="1"/>
<rect x="921.69" y="578.10" width="4.62" height="10.40" fill="#a0c98a" stroke="#fff" stroke-opacity="0.85" stroke-width="1"/>
<rect x="931.48" y="470.00" width="5.93" height="71.20" fill="#245a61" stroke="#fff" stroke-opacity="0.85" stroke-width="1"/>
<rect x="932.11" y="541.20" width="4.69" height="13.40" fill="#e07c14" stroke="#fff" stroke-opacity="0.85" stroke-width="1"/>
<rect x="931.94" y="554.60" width="5.03" height="29.30" fill="#5fb6b0" stroke="#fff" stroke-opacity="0.85" stroke-width="1"/>
<rect x="932.20" y="583.90" width="4.50" height="4.60" fill="#a0c98a" stroke="#fff" stroke-opacity="0.85" stroke-width="1"/>
<rect x="941.26" y="401.90" width="6.77" height="110.40" fill="#245a61" stroke="#fff" stroke-opacity="0.85" stroke-width="1"/>
<rect x="942.26" y="512.30" width="4.78" height="17.60" fill="#e07c14" stroke="#fff" stroke-opacity="0.85" stroke-width="1"/>
<rect x="941.90" y="529.90" width="5.50" height="51.00" fill="#5fb6b0" stroke="#fff" stroke-opacity="0.85" stroke-width="1"/>
<rect x="942.37" y="580.90" width="4.56" height="7.60" fill="#a0c98a" stroke="#fff" stroke-opacity="0.85" stroke-width="1"/>
<rect x="951.66" y="378.00" width="7.09" height="124.90" fill="#245a61" stroke="#fff" stroke-opacity="0.85" stroke-width="1"/>
<rect x="952.79" y="502.90" width="4.81" height="19.30" fill="#e07c14" stroke="#fff" stroke-opacity="0.85" stroke-width="1"/>
<rect x="952.37" y="522.20" width="5.65" height="58.20" fill="#5fb6b0" stroke="#fff" stroke-opacity="0.85" stroke-width="1"/>
<rect x="952.91" y="580.40" width="4.57" height="8.10" fill="#a0c98a" stroke="#fff" stroke-opacity="0.85" stroke-width="1"/>
<rect x="962.43" y="379.20" width="7.03" height="122.50" fill="#245a61" stroke="#fff" stroke-opacity="0.85" stroke-width="1"/>
<rect x="963.54" y="501.70" width="4.81" height="19.30" fill="#e07c14" stroke="#fff" stroke-opacity="0.85" stroke-width="1"/>
<rect x="963.12" y="521.00" width="5.67" height="58.90" fill="#5fb6b0" stroke="#fff" stroke-opacity="0.85" stroke-width="1"/>
<rect x="963.66" y="579.90" width="4.58" height="8.60" fill="#a0c98a" stroke="#fff" stroke-opacity="0.85" stroke-width="1"/>
<rect x="973.37" y="368.20" width="7.16" height="128.40" fill="#245a61" stroke="#fff" stroke-opacity="0.85" stroke-width="1"/>
<rect x="974.55" y="496.60" width="4.80" height="18.50" fill="#e07c14" stroke="#fff" stroke-opacity="0.85" stroke-width="1"/>
<rect x="974.05" y="515.10" width="5.79" height="64.80" fill="#5fb6b0" stroke="#fff" stroke-opacity="0.85" stroke-width="1"/>
<rect x="974.66" y="579.90" width="4.58" height="8.60" fill="#a0c98a" stroke="#fff" stroke-opacity="0.85" stroke-width="1"/>
<rect x="984.17" y="489.00" width="5.66" height="58.50" fill="#245a61" stroke="#fff" stroke-opacity="0.85" stroke-width="1"/>
<rect x="984.69" y="547.50" width="4.61" height="9.90" fill="#e07c14" stroke="#fff" stroke-opacity="0.85" stroke-width="1"/>
<rect x="984.52" y="557.40" width="4.97" height="26.50" fill="#5fb6b0" stroke="#fff" stroke-opacity="0.85" stroke-width="1"/>
<rect x="984.75" y="583.90" width="4.50" height="4.60" fill="#a0c98a" stroke="#fff" stroke-opacity="0.85" stroke-width="1"/>
<rect x="993.42" y="335.30" width="7.56" height="146.90" fill="#245a61" stroke="#fff" stroke-opacity="0.85" stroke-width="1"/>
<rect x="994.78" y="482.20" width="4.85" height="20.70" fill="#e07c14" stroke="#fff" stroke-opacity="0.85" stroke-width="1"/>
<rect x="994.18" y="502.90" width="6.04" height="76.30" fill="#5fb6b0" stroke="#fff" stroke-opacity="0.85" stroke-width="1"/>
<rect x="994.90" y="579.20" width="4.60" height="9.30" fill="#a0c98a" stroke="#fff" stroke-opacity="0.85" stroke-width="1"/>
<rect x="1004.46" y="203.10" width="9.18" height="222.30" fill="#245a61" stroke="#fff" stroke-opacity="0.85" stroke-width="1"/>
<rect x="1006.52" y="425.40" width="5.07" height="31.00" fill="#e07c14" stroke="#fff" stroke-opacity="0.85" stroke-width="1"/>
<rect x="1005.59" y="456.40" width="6.92" height="117.40" fill="#5fb6b0" stroke="#fff" stroke-opacity="0.85" stroke-width="1"/>
<rect x="1006.69" y="573.80" width="4.72" height="14.70" fill="#a0c98a" stroke="#fff" stroke-opacity="0.85" stroke-width="1"/>
<rect x="1017.37" y="428.40" width="6.47" height="96.10" fill="#245a61" stroke="#fff" stroke-opacity="0.85" stroke-width="1"/>
<rect x="1018.26" y="524.50" width="4.68" height="13.20" fill="#e07c14" stroke="#fff" stroke-opacity="0.85" stroke-width="1"/>
<rect x="1017.94" y="537.70" width="5.33" height="43.20" fill="#5fb6b0" stroke="#fff" stroke-opacity="0.85" stroke-width="1"/>
<rect x="1018.32" y="580.90" width="4.56" height="7.60" fill="#a0c98a" stroke="#fff" stroke-opacity="0.85" stroke-width="1"/>
<rect x="1027.35" y="440.20" width="6.29" height="88.10" fill="#245a61" stroke="#fff" stroke-opacity="0.85" stroke-width="1"/>
<rect x="1028.15" y="528.30" width="4.70" height="14.10" fill="#e07c14" stroke="#fff" stroke-opacity="0.85" stroke-width="1"/>
<rect x="1027.87" y="542.40" width="5.26" height="39.90" fill="#5fb6b0" stroke="#fff" stroke-opacity="0.85" stroke-width="1"/>
<rect x="1028.23" y="582.30" width="4.53" height="6.20" fill="#a0c98a" stroke="#fff" stroke-opacity="0.85" stroke-width="1"/>
<rect x="1037.32" y="399.80" width="6.96" height="119.10" fill="#245a61" stroke="#fff" stroke-opacity="0.85" stroke-width="1"/>
<rect x="1038.41" y="518.90" width="4.79" height="18.10" fill="#e07c14" stroke="#fff" stroke-opacity="0.85" stroke-width="1"/>
<rect x="1038.11" y="537.00" width="5.37" height="45.30" fill="#5fb6b0" stroke="#fff" stroke-opacity="0.85" stroke-width="1"/>
<rect x="1038.53" y="582.30" width="4.53" height="6.20" fill="#a0c98a" stroke="#fff" stroke-opacity="0.85" stroke-width="1"/>
<rect x="1048.09" y="232.00" width="8.91" height="209.90" fill="#245a61" stroke="#fff" stroke-opacity="0.85" stroke-width="1"/>
<rect x="1050.02" y="441.90" width="5.07" height="31.00" fill="#e07c14" stroke="#fff" stroke-opacity="0.85" stroke-width="1"/>
<rect x="1049.26" y="472.90" width="6.58" height="101.60" fill="#5fb6b0" stroke="#fff" stroke-opacity="0.85" stroke-width="1"/>
<rect x="1050.20" y="574.50" width="4.70" height="14.00" fill="#a0c98a" stroke="#fff" stroke-opacity="0.85" stroke-width="1"/>
<rect x="1060.73" y="428.90" width="6.44" height="95.10" fill="#245a61" stroke="#fff" stroke-opacity="0.85" stroke-width="1"/>
<rect x="1061.54" y="524.00" width="4.82" height="19.50" fill="#e07c14" stroke="#fff" stroke-opacity="0.85" stroke-width="1"/>
<rect x="1061.33" y="543.50" width="5.23" height="38.80" fill="#5fb6b0" stroke="#fff" stroke-opacity="0.85" stroke-width="1"/>
<rect x="1061.68" y="582.30" width="4.53" height="6.20" fill="#a0c98a" stroke="#fff" stroke-opacity="0.85" stroke-width="1"/>
<rect x="1070.99" y="424.90" width="6.81" height="112.10" fill="#245a61" stroke="#fff" stroke-opacity="0.85" stroke-width="1"/>
<rect x="1072.12" y="537.00" width="4.55" height="7.00" fill="#e07c14" stroke="#fff" stroke-opacity="0.85" stroke-width="1"/>
<rect x="1071.80" y="544.00" width="5.21" height="37.60" fill="#5fb6b0" stroke="#fff" stroke-opacity="0.85" stroke-width="1"/>
<rect x="1072.13" y="581.60" width="4.55" height="6.90" fill="#a0c98a" stroke="#fff" stroke-opacity="0.85" stroke-width="1"/>
<rect x="1081.25" y="507.80" width="5.49" height="50.80" fill="#245a61" stroke="#fff" stroke-opacity="0.85" stroke-width="1"/>
<rect x="1081.68" y="558.60" width="4.64" height="11.20" fill="#e07c14" stroke="#fff" stroke-opacity="0.85" stroke-width="1"/>
<rect x="1081.64" y="569.80" width="4.73" height="15.30" fill="#5fb6b0" stroke="#fff" stroke-opacity="0.85" stroke-width="1"/>
<rect x="1081.76" y="585.10" width="4.47" height="3.40" fill="#a0c98a" stroke="#fff" stroke-opacity="0.85" stroke-width="1"/>
<rect x="1090.34" y="446.80" width="6.22" height="84.80" fill="#245a61" stroke="#fff" stroke-opacity="0.85" stroke-width="1"/>
<rect x="1091.09" y="531.60" width="4.72" height="14.80" fill="#e07c14" stroke="#fff" stroke-opacity="0.85" stroke-width="1"/>
<rect x="1090.86" y="546.40" width="5.17" height="35.90" fill="#5fb6b0" stroke="#fff" stroke-opacity="0.85" stroke-width="1"/>
<rect x="1091.18" y="582.30" width="4.53" height="6.20" fill="#a0c98a" stroke="#fff" stroke-opacity="0.85" stroke-width="1"/>
<rect x="1100.08" y="478.50" width="5.85" height="67.40" fill="#245a61" stroke="#fff" stroke-opacity="0.85" stroke-width="1"/>
<rect x="1100.63" y="545.90" width="4.74" height="15.70" fill="#e07c14" stroke="#fff" stroke-opacity="0.85" stroke-width="1"/>
<rect x="1100.55" y="561.60" width="4.89" height="23.00" fill="#5fb6b0" stroke="#fff" stroke-opacity="0.85" stroke-width="1"/>
<rect x="1100.76" y="584.60" width="4.48" height="3.90" fill="#a0c98a" stroke="#fff" stroke-opacity="0.85" stroke-width="1"/>
<rect x="1109.30" y="399.10" width="7.00" height="120.70" fill="#245a61" stroke="#fff" stroke-opacity="0.85" stroke-width="1"/>
<rect x="1110.42" y="519.80" width="4.75" height="16.50" fill="#e07c14" stroke="#fff" stroke-opacity="0.85" stroke-width="1"/>
<rect x="1110.11" y="536.30" width="5.37" height="45.30" fill="#5fb6b0" stroke="#fff" stroke-opacity="0.85" stroke-width="1"/>
<rect x="1110.53" y="581.60" width="4.55" height="6.90" fill="#a0c98a" stroke="#fff" stroke-opacity="0.85" stroke-width="1"/>
<rect x="1120.45" y="289.00" width="8.00" height="167.40" fill="#245a61" stroke="#fff" stroke-opacity="0.85" stroke-width="1"/>
<rect x="1121.95" y="456.40" width="5.00" height="27.70" fill="#e07c14" stroke="#fff" stroke-opacity="0.85" stroke-width="1"/>
<rect x="1121.26" y="484.10" width="6.38" height="92.10" fill="#5fb6b0" stroke="#fff" stroke-opacity="0.85" stroke-width="1"/>
<rect x="1122.12" y="576.20" width="4.66" height="12.30" fill="#a0c98a" stroke="#fff" stroke-opacity="0.85" stroke-width="1"/>
<rect x="1131.77" y="313.00" width="7.75" height="155.90" fill="#245a61" stroke="#fff" stroke-opacity="0.85" stroke-width="1"/>
<rect x="1133.19" y="468.90" width="4.91" height="23.90" fill="#e07c14" stroke="#fff" stroke-opacity="0.85" stroke-width="1"/>
<rect x="1132.55" y="492.80" width="6.21" height="84.10" fill="#5fb6b0" stroke="#fff" stroke-opacity="0.85" stroke-width="1"/>
<rect x="1133.33" y="576.90" width="4.65" height="11.60" fill="#a0c98a" stroke="#fff" stroke-opacity="0.85" stroke-width="1"/>
<rect x="1143.47" y="443.00" width="6.26" height="86.50" fill="#245a61" stroke="#fff" stroke-opacity="0.85" stroke-width="1"/>
<rect x="1144.25" y="529.50" width="4.70" height="14.00" fill="#e07c14" stroke="#fff" stroke-opacity="0.85" stroke-width="1"/>
<rect x="1143.98" y="543.50" width="5.23" height="38.80" fill="#5fb6b0" stroke="#fff" stroke-opacity="0.85" stroke-width="1"/>
<rect x="1144.33" y="582.30" width="4.53" height="6.20" fill="#a0c98a" stroke="#fff" stroke-opacity="0.85" stroke-width="1"/>
<rect x="1153.44" y="378.70" width="7.11" height="126.10" fill="#245a61" stroke="#fff" stroke-opacity="0.85" stroke-width="1"/>
<rect x="1154.59" y="504.80" width="4.83" height="19.90" fill="#e07c14" stroke="#fff" stroke-opacity="0.85" stroke-width="1"/>
<rect x="1154.21" y="524.70" width="5.59" height="55.20" fill="#5fb6b0" stroke="#fff" stroke-opacity="0.85" stroke-width="1"/>
<rect x="1154.71" y="579.90" width="4.58" height="8.60" fill="#a0c98a" stroke="#fff" stroke-opacity="0.85" stroke-width="1"/>
<rect x="1164.30" y="331.10" width="7.70" height="153.50" fill="#245a61" stroke="#fff" stroke-opacity="0.85" stroke-width="1"/>
<rect x="1165.70" y="484.60" width="4.89" height="23.00" fill="#e07c14" stroke="#fff" stroke-opacity="0.85" stroke-width="1"/>
<rect x="1165.18" y="507.60" width="5.94" height="71.60" fill="#5fb6b0" stroke="#fff" stroke-opacity="0.85" stroke-width="1"/>
<rect x="1165.85" y="579.20" width="4.60" height="9.30" fill="#a0c98a" stroke="#fff" stroke-opacity="0.85" stroke-width="1"/>
<rect x="1175.73" y="484.80" width="5.74" height="62.30" fill="#245a61" stroke="#fff" stroke-opacity="0.85" stroke-width="1"/>
<rect x="1176.28" y="547.10" width="4.65" height="11.50" fill="#e07c14" stroke="#fff" stroke-opacity="0.85" stroke-width="1"/>
<rect x="1176.12" y="558.60" width="4.96" height="26.00" fill="#5fb6b0" stroke="#fff" stroke-opacity="0.85" stroke-width="1"/>
<rect x="1176.36" y="584.60" width="4.48" height="3.90" fill="#a0c98a" stroke="#fff" stroke-opacity="0.85" stroke-width="1"/>
<rect x="1184.73" y="454.70" width="6.14" height="81.10" fill="#245a61" stroke="#fff" stroke-opacity="0.85" stroke-width="1"/>
<rect x="1185.47" y="535.80" width="4.66" height="12.20" fill="#e07c14" stroke="#fff" stroke-opacity="0.85" stroke-width="1"/>
<rect x="1185.22" y="548.00" width="5.16" height="35.50" fill="#5fb6b0" stroke="#fff" stroke-opacity="0.85" stroke-width="1"/>
<rect x="1185.55" y="583.50" width="4.51" height="5.00" fill="#a0c98a" stroke="#fff" stroke-opacity="0.85" stroke-width="1"/>
<rect x="1194.82" y="367.50" width="7.16" height="128.40" fill="#245a61" stroke="#fff" stroke-opacity="0.85" stroke-width="1"/>
<rect x="1196.00" y="495.90" width="4.79" height="18.30" fill="#e07c14" stroke="#fff" stroke-opacity="0.85" stroke-width="1"/>
<rect x="1195.49" y="514.20" width="5.82" height="66.20" fill="#5fb6b0" stroke="#fff" stroke-opacity="0.85" stroke-width="1"/>
<rect x="1196.11" y="580.40" width="4.57" height="8.10" fill="#a0c98a" stroke="#fff" stroke-opacity="0.85" stroke-width="1"/>
<rect x="1205.69" y="388.50" width="6.92" height="117.20" fill="#245a61" stroke="#fff" stroke-opacity="0.85" stroke-width="1"/>
<rect x="1206.77" y="505.70" width="4.77" height="17.20" fill="#e07c14" stroke="#fff" stroke-opacity="0.85" stroke-width="1"/>
<rect x="1206.33" y="522.90" width="5.65" height="58.00" fill="#5fb6b0" stroke="#fff" stroke-opacity="0.85" stroke-width="1"/>
<rect x="1206.87" y="580.90" width="4.56" height="7.60" fill="#a0c98a" stroke="#fff" stroke-opacity="0.85" stroke-width="1"/>
<rect x="1216.17" y="497.20" width="5.46" height="49.20" fill="#245a61" stroke="#fff" stroke-opacity="0.85" stroke-width="1"/>
<rect x="1216.59" y="546.40" width="4.62" height="10.10" fill="#e07c14" stroke="#fff" stroke-opacity="0.85" stroke-width="1"/>
<rect x="1216.41" y="556.50" width="4.99" height="27.40" fill="#5fb6b0" stroke="#fff" stroke-opacity="0.85" stroke-width="1"/>
<rect x="1216.65" y="583.90" width="4.50" height="4.60" fill="#a0c98a" stroke="#fff" stroke-opacity="0.85" stroke-width="1"/>
<rect x="503" y="587.8" width="720" height="1.4" fill="#9d9995"/>
</svg>
<div class="a" style="right:757.5px;top:580.3px;font-size:11.7px;line-height:14px;color:#4a4643;text-align:right">0</div>
<div class="a" style="right:757.5px;top:514.2px;font-size:11.7px;line-height:14px;color:#4a4643;text-align:right">5,000</div>
<div class="a" style="right:757.5px;top:448.4px;font-size:11.7px;line-height:14px;color:#4a4643;text-align:right">10,000</div>
<div class="a" style="right:757.5px;top:382.6px;font-size:11.7px;line-height:14px;color:#4a4643;text-align:right">15,000</div>
<div class="a" style="right:757.5px;top:317.0px;font-size:11.7px;line-height:14px;color:#4a4643;text-align:right">20,000</div>
<div class="a" style="right:757.5px;top:251.2px;font-size:11.7px;line-height:14px;color:#4a4643;text-align:right">25,000</div>
<div class="a" style="right:757.5px;top:185.2px;font-size:11.7px;line-height:14px;color:#4a4643;text-align:right">30,000</div>
<div class="a" style="left:442px;top:391px;width:0;height:0"><div style="position:absolute;left:0;top:0;transform:translate(-50%,-50%) rotate(-90deg);font-size:10.8px;line-height:12px;color:#6b6560;white-space:nowrap">QUANTITY_SOLD</div></div>
<div class="a" style="left:508.95px;top:597px;width:0;height:0"><div style="position:absolute;right:0;top:0;transform-origin:100% 50%;transform:translate(0,-50%) rotate(-90deg) translate(0,0);font-size:11.4px;line-height:12px;color:#161513;white-space:nowrap">1.44MB External 3.5&quot; Diskette</div></div>
<div class="a" style="left:529.05px;top:597px;width:0;height:0"><div style="position:absolute;right:0;top:0;transform-origin:100% 50%;transform:translate(0,-50%) rotate(-90deg) translate(0,0);font-size:11.4px;line-height:12px;color:#161513;white-space:nowrap">17&quot; LCD w/built-in HDTV Tuner</div></div>
<div class="a" style="left:545.80px;top:597px;width:0;height:0"><div style="position:absolute;right:0;top:0;transform-origin:100% 50%;transform:translate(0,-50%) rotate(-90deg) translate(0,0);font-size:11.4px;line-height:12px;color:#161513;white-space:nowrap">256MB Memory Card</div></div>
<div class="a" style="left:565.80px;top:597px;width:0;height:0"><div style="position:absolute;right:0;top:0;transform-origin:100% 50%;transform:translate(0,-50%) rotate(-90deg) translate(0,0);font-size:11.4px;line-height:12px;color:#161513;white-space:nowrap">3 1/2&quot; Bulk diskettes, Box of 50</div></div>
<div class="a" style="left:582.55px;top:597px;width:0;height:0"><div style="position:absolute;right:0;top:0;transform-origin:100% 50%;transform:translate(0,-50%) rotate(-90deg) translate(0,0);font-size:11.4px;line-height:12px;color:#161513;white-space:nowrap">64MB Memory Card</div></div>
<div class="a" style="left:599.90px;top:597px;width:0;height:0"><div style="position:absolute;right:0;top:0;transform-origin:100% 50%;transform:translate(0,-50%) rotate(-90deg) translate(0,0);font-size:11.4px;line-height:12px;color:#161513;white-space:nowrap">Adventures with Numbers</div></div>
<div class="a" style="left:620.60px;top:597px;width:0;height:0"><div style="position:absolute;right:0;top:0;transform-origin:100% 50%;transform:translate(0,-50%) rotate(-90deg) translate(0,0);font-size:11.4px;line-height:12px;color:#161513;white-space:nowrap">CD-R Mini Discs</div></div>
<div class="a" style="left:643.85px;top:597px;width:0;height:0"><div style="position:absolute;right:0;top:0;transform-origin:100% 50%;transform:translate(0,-50%) rotate(-90deg) translate(0,0);font-size:11.4px;line-height:12px;color:#161513;white-space:nowrap">CD-R, Professional Grade, Pac…</div></div>
<div class="a" style="left:665.85px;top:597px;width:0;height:0"><div style="position:absolute;right:0;top:0;transform-origin:100% 50%;transform:translate(0,-50%) rotate(-90deg) translate(0,0);font-size:11.4px;line-height:12px;color:#161513;white-space:nowrap">CD-RW, High Speed, Pack of 10</div></div>
<div class="a" style="left:684.90px;top:597px;width:0;height:0"><div style="position:absolute;right:0;top:0;transform-origin:100% 50%;transform:translate(0,-50%) rotate(-90deg) translate(0,0);font-size:11.4px;line-height:12px;color:#161513;white-space:nowrap">DVD-R Disc with Jewel Case, 4…</div></div>
<div class="a" style="left:707.00px;top:597px;width:0;height:0"><div style="position:absolute;right:0;top:0;transform-origin:100% 50%;transform:translate(0,-50%) rotate(-90deg) translate(0,0);font-size:11.4px;line-height:12px;color:#161513;white-space:nowrap">DVD-RAM Jewel Case, Double…</div></div>
<div class="a" style="left:727.50px;top:597px;width:0;height:0"><div style="position:absolute;right:0;top:0;transform-origin:100% 50%;transform:translate(0,-50%) rotate(-90deg) translate(0,0);font-size:11.4px;line-height:12px;color:#161513;white-space:nowrap">Deluxe Mouse</div></div>
<div class="a" style="left:747.75px;top:597px;width:0;height:0"><div style="position:absolute;right:0;top:0;transform-origin:100% 50%;transform:translate(0,-50%) rotate(-90deg) translate(0,0);font-size:11.4px;line-height:12px;color:#161513;white-space:nowrap">Envoy 256MB - 40GB</div></div>
<div class="a" style="left:766.35px;top:597px;width:0;height:0"><div style="position:absolute;right:0;top:0;transform-origin:100% 50%;transform:translate(0,-50%) rotate(-90deg) translate(0,0);font-size:11.4px;line-height:12px;color:#161513;white-space:nowrap">Envoy External 6X CD-ROM</div></div>
<div class="a" style="left:786.70px;top:597px;width:0;height:0"><div style="position:absolute;right:0;top:0;transform-origin:100% 50%;transform:translate(0,-50%) rotate(-90deg) translate(0,0);font-size:11.4px;line-height:12px;color:#161513;white-space:nowrap">Envoy External Keyboard</div></div>
<div class="a" style="left:805.50px;top:597px;width:0;height:0"><div style="position:absolute;right:0;top:0;transform-origin:100% 50%;transform:translate(0,-50%) rotate(-90deg) translate(0,0);font-size:11.4px;line-height:12px;color:#161513;white-space:nowrap">External 101-key keyboard</div></div>
<div class="a" style="left:826.95px;top:597px;width:0;height:0"><div style="position:absolute;right:0;top:0;transform-origin:100% 50%;transform:translate(0,-50%) rotate(-90deg) translate(0,0);font-size:11.4px;line-height:12px;color:#161513;white-space:nowrap">External 8X CD-ROM</div></div>
<div class="a" style="left:845.35px;top:597px;width:0;height:0"><div style="position:absolute;right:0;top:0;transform-origin:100% 50%;transform:translate(0,-50%) rotate(-90deg) translate(0,0);font-size:11.4px;line-height:12px;color:#161513;white-space:nowrap">Fly Fishing</div></div>
<div class="a" style="left:863.80px;top:597px;width:0;height:0"><div style="position:absolute;right:0;top:0;transform-origin:100% 50%;transform:translate(0,-50%) rotate(-90deg) translate(0,0);font-size:11.4px;line-height:12px;color:#161513;white-space:nowrap">Internal 6X CD-ROM</div></div>
<div class="a" style="left:885.25px;top:597px;width:0;height:0"><div style="position:absolute;right:0;top:0;transform-origin:100% 50%;transform:translate(0,-50%) rotate(-90deg) translate(0,0);font-size:11.4px;line-height:12px;color:#161513;white-space:nowrap">Keyboard Wrist Rest</div></div>
<div class="a" style="left:905.30px;top:597px;width:0;height:0"><div style="position:absolute;right:0;top:0;transform-origin:100% 50%;transform:translate(0,-50%) rotate(-90deg) translate(0,0);font-size:11.4px;line-height:12px;color:#161513;white-space:nowrap">Martial Arts Champions</div></div>
<div class="a" style="left:924.00px;top:597px;width:0;height:0"><div style="position:absolute;right:0;top:0;transform-origin:100% 50%;transform:translate(0,-50%) rotate(-90deg) translate(0,0);font-size:11.4px;line-height:12px;color:#161513;white-space:nowrap">Model A3827H Black Image C…</div></div>
<div class="a" style="left:944.65px;top:597px;width:0;height:0"><div style="position:absolute;right:0;top:0;transform-origin:100% 50%;transform:translate(0,-50%) rotate(-90deg) translate(0,0);font-size:11.4px;line-height:12px;color:#161513;white-space:nowrap">Model C9827B Cordless Phon…</div></div>
<div class="a" style="left:965.95px;top:597px;width:0;height:0"><div style="position:absolute;right:0;top:0;transform-origin:100% 50%;transform:translate(0,-50%) rotate(-90deg) translate(0,0);font-size:11.4px;line-height:12px;color:#161513;white-space:nowrap">Model K3822L Cordless Phon…</div></div>
<div class="a" style="left:987.00px;top:597px;width:0;height:0"><div style="position:absolute;right:0;top:0;transform-origin:100% 50%;transform:translate(0,-50%) rotate(-90deg) translate(0,0);font-size:11.4px;line-height:12px;color:#161513;white-space:nowrap">Model NM500X High Yield Ton…</div></div>
<div class="a" style="left:1009.05px;top:597px;width:0;height:0"><div style="position:absolute;right:0;top:0;transform-origin:100% 50%;transform:translate(0,-50%) rotate(-90deg) translate(0,0);font-size:11.4px;line-height:12px;color:#161513;white-space:nowrap">Mouse Pad</div></div>
<div class="a" style="left:1030.50px;top:597px;width:0;height:0"><div style="position:absolute;right:0;top:0;transform-origin:100% 50%;transform:translate(0,-50%) rotate(-90deg) translate(0,0);font-size:11.4px;line-height:12px;color:#161513;white-space:nowrap">Multimedia speakers- 5&quot; cones</div></div>
<div class="a" style="left:1052.55px;top:597px;width:0;height:0"><div style="position:absolute;right:0;top:0;transform-origin:100% 50%;transform:translate(0,-50%) rotate(-90deg) translate(0,0);font-size:11.4px;line-height:12px;color:#161513;white-space:nowrap">O/S Documentation Set - Engl…</div></div>
<div class="a" style="left:1074.40px;top:597px;width:0;height:0"><div style="position:absolute;right:0;top:0;transform-origin:100% 50%;transform:translate(0,-50%) rotate(-90deg) translate(0,0);font-size:11.4px;line-height:12px;color:#161513;white-space:nowrap">O/S Documentation Set - Ger…</div></div>
<div class="a" style="left:1093.45px;top:597px;width:0;height:0"><div style="position:absolute;right:0;top:0;transform-origin:100% 50%;transform:translate(0,-50%) rotate(-90deg) translate(0,0);font-size:11.4px;line-height:12px;color:#161513;white-space:nowrap">O/S Documentation Set - Kanji</div></div>
<div class="a" style="left:1112.80px;top:597px;width:0;height:0"><div style="position:absolute;right:0;top:0;transform-origin:100% 50%;transform:translate(0,-50%) rotate(-90deg) translate(0,0);font-size:11.4px;line-height:12px;color:#161513;white-space:nowrap">OraMusic CD-R, Pack of 10</div></div>
<div class="a" style="left:1135.65px;top:597px;width:0;height:0"><div style="position:absolute;right:0;top:0;transform-origin:100% 50%;transform:translate(0,-50%) rotate(-90deg) translate(0,0);font-size:11.4px;line-height:12px;color:#161513;white-space:nowrap">PCMCIA modem/fax 28800 b…</div></div>
<div class="a" style="left:1157.00px;top:597px;width:0;height:0"><div style="position:absolute;right:0;top:0;transform-origin:100% 50%;transform:translate(0,-50%) rotate(-90deg) translate(0,0);font-size:11.4px;line-height:12px;color:#161513;white-space:nowrap">SIMM- 16MB PCMCIAII card</div></div>
<div class="a" style="left:1178.60px;top:597px;width:0;height:0"><div style="position:absolute;right:0;top:0;transform-origin:100% 50%;transform:translate(0,-50%) rotate(-90deg) translate(0,0);font-size:11.4px;line-height:12px;color:#161513;white-space:nowrap">Smash up Boxing</div></div>
<div class="a" style="left:1198.40px;top:597px;width:0;height:0"><div style="position:absolute;right:0;top:0;transform-origin:100% 50%;transform:translate(0,-50%) rotate(-90deg) translate(0,0);font-size:11.4px;line-height:12px;color:#161513;white-space:nowrap">Unix/Windows 1-user pack</div></div>
<div class="a" style="left:1218.90px;top:597px;width:0;height:0"><div style="position:absolute;right:0;top:0;transform-origin:100% 50%;transform:translate(0,-50%) rotate(-90deg) translate(0,0);font-size:11.4px;line-height:12px;color:#161513;white-space:nowrap">Y Box</div></div>
<div class="a" style="left:834px;top:772px;font-size:10.8px;line-height:13px;color:#6b6560">PROD_NAME</div>
<div class="a" style="left:436px;top:153px;font-size:14px;line-height:16px;color:#161513;letter-spacing:-0.28px">QUANTITY_SOLD / PROD_NAME, COUNTRY_REGION, CALENDAR_YEAR</div>
<div class="a" style="left:606px;top:806.5px;font-size:11px;line-height:13px;color:#6b6560;letter-spacing:0px">COUNTRY_REGION</div>
<div class="a" style="left:724px;top:808px;width:10px;height:10px;background:#245a61"></div>
<div class="a" style="left:742px;top:806.5px;font-size:11.5px;line-height:13px;color:#161513;letter-spacing:-0.1px">Americas</div>
<div class="a" style="left:799px;top:808px;width:10px;height:10px;background:#e07c14"></div>
<div class="a" style="left:816px;top:806.5px;font-size:11.5px;line-height:13px;color:#161513;letter-spacing:-0.1px">Asia</div>
<div class="a" style="left:848px;top:808px;width:10px;height:10px;background:#5fb6b0"></div>
<div class="a" style="left:865px;top:806.5px;font-size:11.5px;line-height:13px;color:#161513;letter-spacing:-0.1px">Europe</div>
<div class="a" style="left:912px;top:808px;width:10px;height:10px;background:#4d4038"></div>
<div class="a" style="left:930px;top:806.5px;font-size:11.5px;line-height:13px;color:#161513;letter-spacing:-0.1px">Middle East</div>
<div class="a" style="left:999px;top:808px;width:10px;height:10px;background:#a0c98a"></div>
<div class="a" style="left:1016px;top:806.5px;font-size:11.5px;line-height:13px;color:#161513;letter-spacing:-0.1px">Oceania</div>
<div class="a" style="left:605px;top:834.5px;font-size:11px;line-height:13px;color:#6b6560;letter-spacing:0px">CALENDAR_YEAR</div>
<div class="a" style="left:716px;top:834.5px;font-size:11.5px;line-height:13px;color:#161513;letter-spacing:-0.1px">2千</div>
<svg style="left:740px;top:831px" width="102" height="17" viewBox="0 0 102 17"><path d="M2 12.5H5M2 15.5H5M3.5 12.5V15.5" stroke="#4a4643" stroke-width="1"/><path d="M8 11.5L94.5 1.5V15.5H8Z" fill="#555250"/><path d="M96.5 1.5H99.5M96.5 15.5H99.5M98 1.5V15.5" stroke="#4a4643" stroke-width="1"/></svg>
<div class="a" style="left:849px;top:834.5px;font-size:11.5px;line-height:13px;color:#161513;letter-spacing:-0.1px">34百万</div></body></html>
